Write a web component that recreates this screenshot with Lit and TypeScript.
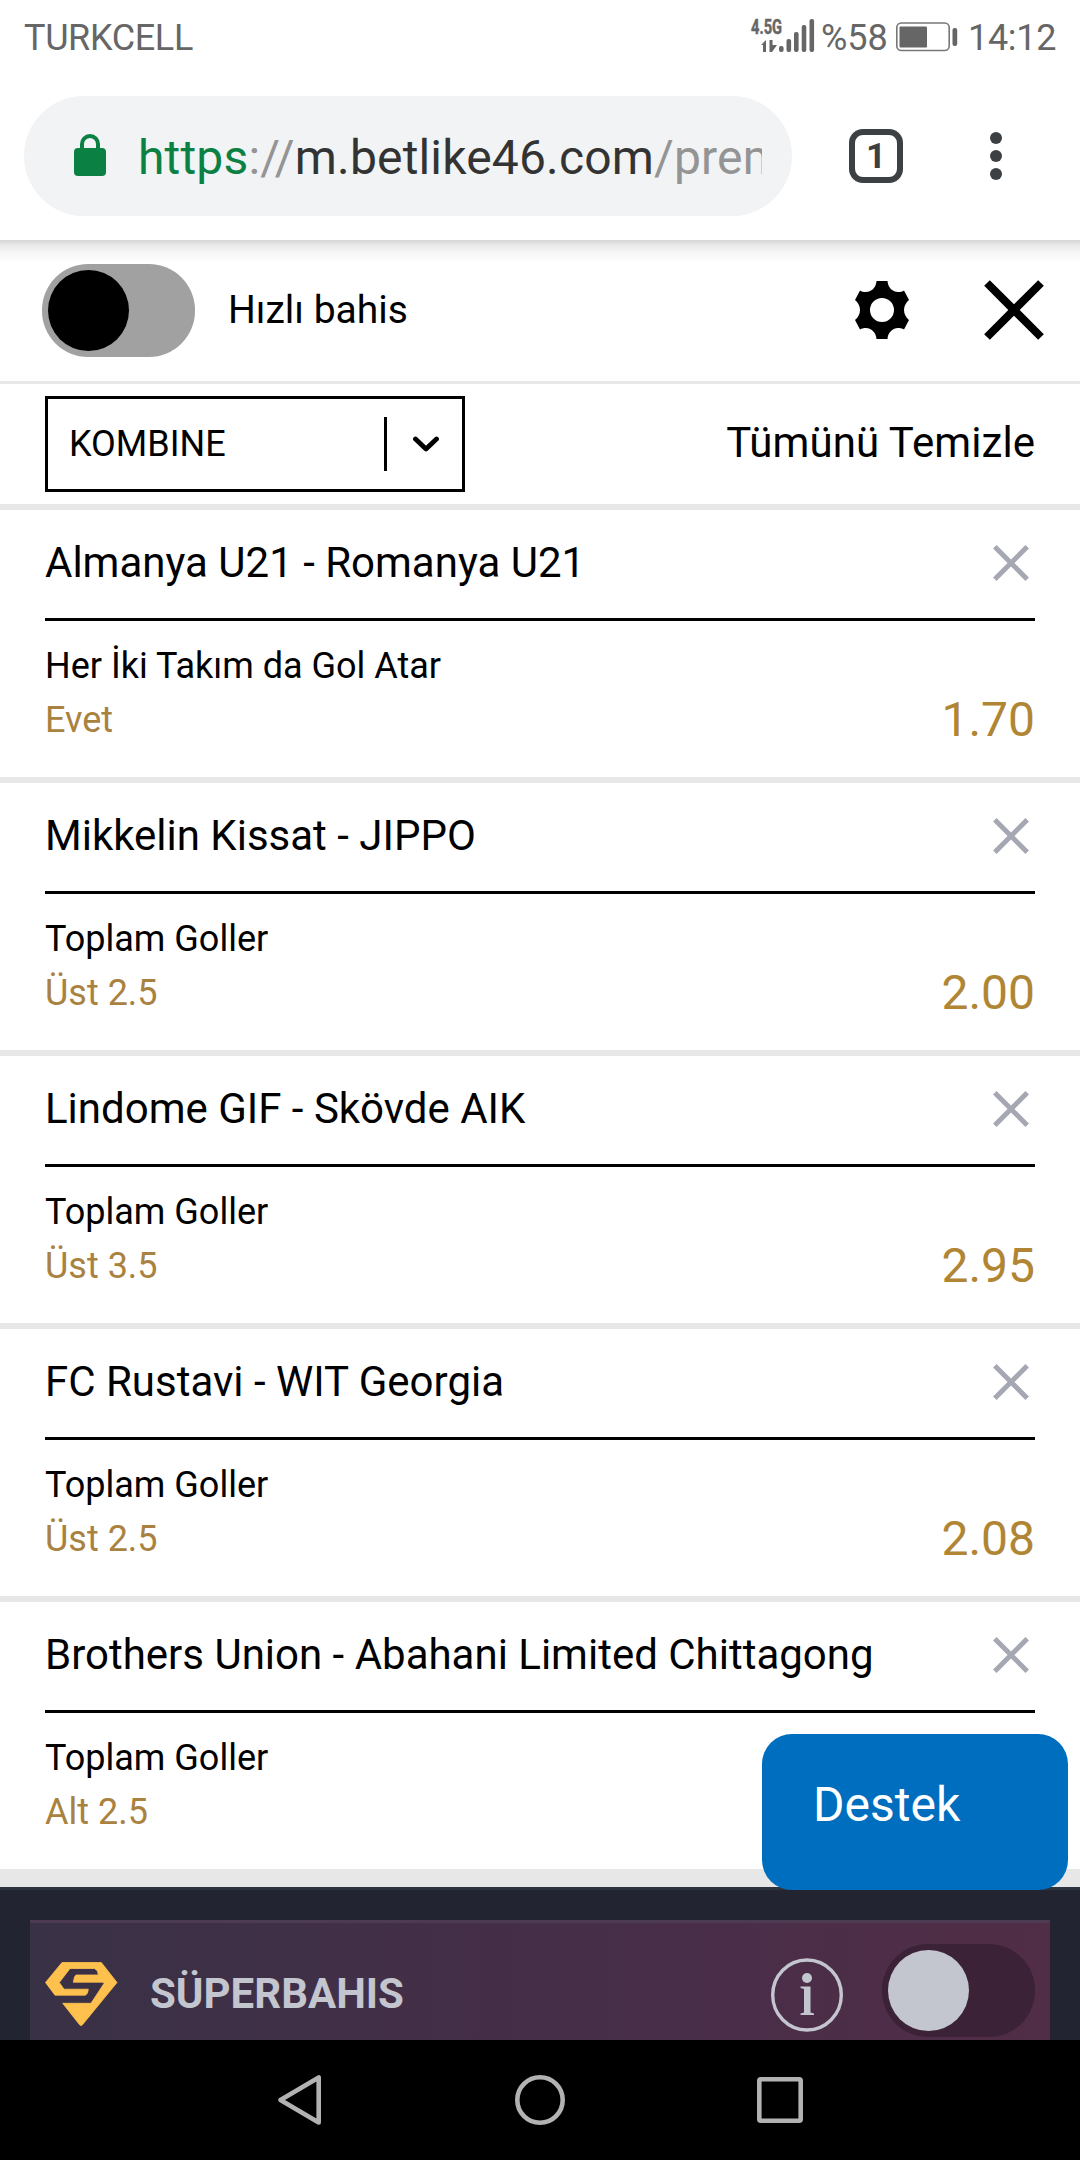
import { LitElement, html, css, svg } from "lit";
import { customElement, property } from "lit/decorators.js";

interface Bet {
  match: string;
  market: string;
  pick: string;
  odds: string;
}

const bets: Bet[] = [
  { match: "Almanya U21 - Romanya U21", market: "Her İki Takım da Gol Atar", pick: "Evet", odds: "1.70" },
  { match: "Mikkelin Kissat - JIPPO", market: "Toplam Goller", pick: "Üst 2.5", odds: "2.00" },
  { match: "Lindome GIF - Skövde AIK", market: "Toplam Goller", pick: "Üst 3.5", odds: "2.95" },
  { match: "FC Rustavi - WIT Georgia", market: "Toplam Goller", pick: "Üst 2.5", odds: "2.08" },
  { match: "Brothers Union - Abahani Limited Chittagong", market: "Toplam Goller", pick: "Alt 2.5", odds: "" },
];

@customElement("status-bar")
class StatusBar extends LitElement {
  static styles = css`
    :host { display: flex; align-items: center; height: 72px; box-sizing: border-box; padding: 3px 26px 0 24px; color: #666; font-size: 36px; line-height: 54px; }
    .carrier { flex: 1; letter-spacing: -0.35px; }
    .signal { width: 65px; height: 36px; margin: 0 6px 5px 0; overflow: visible; }
    .net { font: bold 21px "Roboto", sans-serif; stroke: #666; stroke-width: 0.5px; }
    .percent { width: 64px; white-space: nowrap; }
    .battery { width: 62px; height: 30px; margin: 0 10px 1px 11px; }
    .clock { width: 86px; white-space: nowrap; letter-spacing: -0.3px; }
  `;
  render() {
    return html`
      <span class="carrier">TURKCELL</span>
      <svg class="signal" viewBox="750 17 65 36" fill="#666">
        <text class="net" x="751" y="34" textLength="31" lengthAdjust="spacingAndGlyphs">4.5G</text>
        <path d="M766 40V52H763V45H761ZM769.500 40H772.500V45H777L772 52H769.500Z" />
        ${[[779, 46], [786.5, 39], [794, 32], [801.7, 25], [809.5, 19]].map(
          ([x, y]) => svg`<rect x=${x} y=${y} width="4.6" height=${52 - y} rx="2" />`
        )}
      </svg>
      <span class="percent">%58</span>
      <svg class="battery" viewBox="0 0 62 30">
        <rect x="0.8" y="1" width="52.400" height="27.500" rx="4.500" fill="none" stroke="#777" stroke-width="1.600" />
        <rect x="3.500" y="4.500" width="27.500" height="21" rx="1" fill="#666" />
        <rect x="56.500" y="6" width="4.700" height="18" rx="2" fill="#666" />
      </svg>
      <span class="clock">14:12</span>
    `;
  }
}

@customElement("browser-bar")
class BrowserBar extends LitElement {
  static styles = css`
    :host { display: flex; align-items: center; height: 168px; box-sizing: border-box; padding: 0 24px; }
    .omnibox { display: flex; align-items: center; width: 768px; height: 120px; box-sizing: border-box; padding: 0 30px 0 50px; border-radius: 60px; background: #f1f3f4; }
    .lock { width: 32px; height: 42px; margin: -2px 32px 0 0; flex: none; }
    .url { flex: 1; overflow: hidden; white-space: nowrap; font-size: 48px; line-height: 64px; letter-spacing: 0.16px; padding-top: 3px; color: #333; }
    .scheme { color: #0b8043; }
    .faint { color: #949494; }
    .tabs { display: flex; align-items: center; justify-content: center; width: 54px; height: 54px; box-sizing: border-box; margin-left: 57px; padding-top: 1px; border: 6px solid #3c4043; border-radius: 14px; font-size: 35px; font-weight: 700; line-height: 40px; color: #3c4043; }
    .menu { width: 12px; height: 50px; margin-left: 87px; }
  `;
  render() {
    return html`
      <div class="omnibox">
        <svg class="lock" viewBox="0 0 32 42">
          <rect y="14" width="32" height="28" rx="4" fill="#0b8043" />
          <path d="M8 16V10a8 8 0 0 1 16 0V16" fill="none" stroke="#0b8043" stroke-width="4" />
        </svg>
        <div class="url"><span class="scheme">https</span><span class="faint">://</span>m.betlike46.com<span class="faint">/prem</span></div>
      </div>
      <div class="tabs">1</div>
      <svg class="menu" viewBox="0 0 12 50" fill="#3c4043">
        <circle cx="6" cy="7" r="6" /><circle cx="6" cy="25" r="6" /><circle cx="6" cy="43" r="6" />
      </svg>
    `;
  }
}

@customElement("pill-toggle")
class PillToggle extends LitElement {
  static styles = css`
    :host { display: flex; width: 153px; height: 93px; box-sizing: border-box; padding: 6px; border-radius: 46px; background: var(--track); flex: none; }
    .knob { width: 81px; height: 81px; border-radius: 50%; background: var(--knob); }
  `;
  render() {
    return html`<div class="knob"></div>`;
  }
}

@customElement("bet-row")
class BetRow extends LitElement {
  @property({ attribute: false }) bet!: Bet;
  static styles = css`
    :host { display: block; height: 267px; padding: 0 45px; }
    .head { display: flex; align-items: center; justify-content: space-between; height: 108px; padding-right: 6px; border-bottom: 3px solid #000; }
    .match { font-size: 42px; line-height: 54px; white-space: nowrap; padding-bottom: 3px; }
    .remove { width: 36px; height: 36px; margin-bottom: 2px; }
    .body { display: flex; justify-content: space-between; padding-top: 18px; }
    .market, .pick { font-size: 36px; line-height: 54px; }
    .pick { color: #a9823f; }
    .odds { align-self: flex-end; font-size: 48px; line-height: 54px; color: #b08635; }
  `;
  render() {
    const { match, market, pick, odds } = this.bet;
    return html`
      <div class="head">
        <span class="match">${match}</span>
        <svg class="remove" viewBox="0 0 36 36"><path d="M1.800 1.800L34.200 34.200M34.200 1.800L1.800 34.200" stroke="#a5a8b3" stroke-width="5" /></svg>
      </div>
      <div class="body">
        <div>
          <div class="market">${market}</div>
          <div class="pick">${pick}</div>
        </div>
        <div class="odds">${odds}</div>
      </div>
    `;
  }
}

@customElement("app-root")
class AppRoot extends LitElement {
  static styles = css`
    :host { display: block; position: relative; width: 1080px; height: 2160px; overflow: hidden; background: #fff; color: #000; font-family: "Roboto", sans-serif; }
    .quick { display: flex; align-items: center; height: 141px; box-sizing: border-box; padding: 0 36px 0 42px; background: linear-gradient(#d6d6d6, #e9e9e9 5px, #f5f5f5 12px, #fff 23px); }
    .light { --track: #a1a1a1; --knob: #000; }
    .quick-label { flex: 1; padding: 0 0 2px 33px; font-size: 39px; line-height: 54px; }
    .gear { width: 54px; height: 58px; margin: 0 75px 2px 0; }
    .close { width: 60px; height: 60px; margin-bottom: 2px; }
    .tools { display: flex; align-items: center; justify-content: space-between; height: 120px; padding: 0 45px; border-top: 3px solid #e8e8e8; }
    .select { display: flex; align-items: center; width: 420px; height: 96px; box-sizing: border-box; border: 3px solid #000; }
    .value { flex: 1; padding-left: 21px; font-size: 36px; line-height: 54px; }
    .bar { width: 3px; height: 54px; background: #000; }
    .chevron { width: 26px; height: 16px; margin: 0 23px 0 26px; }
    .clear { font-size: 42px; line-height: 54px; padding-bottom: 2px; letter-spacing: 0.07px; }
    .item { border-top: 6px solid #e7e7e7; }
    .gap { height: 18px; background: #e7e7e7; }
    .footer { height: 153px; box-sizing: border-box; padding: 30px 30px 0; overflow: hidden; border-top: 3px solid #2e3340; background: #222531; }
    .promo { display: flex; height: 120px; box-sizing: border-box; padding: 21px 15px 0; border-top: 3px solid #4d3b53; background: linear-gradient(90deg, #393146, #432f47 40%, #482e49 60%, #512d47); }
    .logo { width: 73px; height: 64px; margin: 18px 32px 0 0; flex: none; }
    .brand { flex: 1; font-size: 42px; line-height: 54px; font-weight: 700; color: #c3c5cf; padding-top: 23px; }
    .info { width: 72px; height: 74px; margin: 13.5px 39px 0 0; flex: none; }
    .dark { --track: #3b2236; --knob: #c3c5cf; }
    .nav { display: flex; align-items: center; justify-content: center; gap: 190px; height: 120px; background: #000; }
    .nav-icon { width: 50px; height: 52px; }
    .support { position: absolute; left: 762px; top: 1734px; width: 306px; height: 156px; box-sizing: border-box; padding: 44px 0 0 51px; border-radius: 30px; background: #006ebe; color: #fff; font-size: 48px; line-height: 54px; }
  `;
  render() {
    return html`
      <status-bar></status-bar>
      <browser-bar></browser-bar>
      <div class="quick">
        <pill-toggle class="light"></pill-toggle>
        <span class="quick-label">Hızlı bahis</span>
        <svg class="gear" viewBox="-27 -29 54 58">
          <path fill-rule="evenodd" d="M-5.500 -29H5.500C6 -22 11 -18 16 -18C18.500 -18 20.500 -18.500 22 -19.500L27 -10C24 -7.500 22 -4 22 0C22 4 24 7.500 27 10L22 19.500C20.500 18.500 18.500 18 16 18C11 18 6 22 5.500 29H-5.500C-6 22 -11 18 -16 18C-18.500 18 -20.500 18.500 -22 19.500L-27 10C-24 7.500 -22 4 -22 0C-22 -4 -24 -7.500 -27 -10L-22 -19.500C-20.500 -18.500 -18.500 -18 -16 -18C-11 -18 -6 -22 -5.500 -29ZM12 0A12 12 0 1 0 -12 0A12 12 0 1 0 12 0Z" />
        </svg>
        <svg class="close" viewBox="0 0 60 60"><path d="M3 3L57 57M57 3L3 57" stroke="#000" stroke-width="8" /></svg>
      </div>
      <div class="tools">
        <div class="select">
          <span class="value">KOMBINE</span>
          <span class="bar"></span>
          <svg class="chevron" viewBox="0 0 26 16"><path d="M2.500 3L13 13L23.500 3" fill="none" stroke="#000" stroke-width="4.800" stroke-linecap="round" stroke-linejoin="round" /></svg>
        </div>
        <span class="clear">Tümünü Temizle</span>
      </div>
      <div class="list">${bets.map((bet) => html`<div class="item"><bet-row .bet=${bet}></bet-row></div>`)}</div>
      <div class="gap"></div>
      <div class="footer">
        <div class="promo">
          <svg class="logo" viewBox="0 0 73 64">
            <path fill="#ffc14d" stroke="#ffc14d" stroke-width="0.800" stroke-linejoin="round" d="M17 .5H56.300L72 20.500L37 63.300H35L17.700 41.300H46L59 21.500L58 20.200H28.300L29.500 15L31 13H53.300L52.500 9L49.500 6.500H25L14.300 20.500L19 27.200H43.300L42.500 31L40.500 33.200H10L.5 20.500Z" />
          </svg>
          <span class="brand">SÜPERBAHIS</span>
          <svg class="info" viewBox="0 0 72 74" fill="#c3c5cf">
            <ellipse cx="36" cy="37" rx="34.300" ry="35" fill="none" stroke="#c3c5cf" stroke-width="3.400" />
            <circle cx="36" cy="20" r="5" />
            <path d="M29.500 28.500H39.500V54.500L43 55.500V57H29.500V55.500L33 54.500V31L29.500 30Z" />
          </svg>
          <pill-toggle class="dark"></pill-toggle>
        </div>
      </div>
      <div class="nav">
        <svg class="nav-icon" viewBox="0 0 50 52" fill="none" stroke="#b2b2b2" stroke-width="4.600" stroke-linejoin="round"><path d="M5.500 26L43.700 3.500V48.500Z" /></svg>
        <svg class="nav-icon" viewBox="0 0 50 52" fill="none" stroke="#b2b2b2" stroke-width="4.600"><circle cx="25" cy="26" r="22.700" /></svg>
        <svg class="nav-icon" viewBox="0 0 50 52" fill="none" stroke="#b2b2b2" stroke-width="4.600"><rect x="4.300" y="5.300" width="41.400" height="41.400" rx="1.500" /></svg>
      </div>
      <div class="support">Destek</div>
    `;
  }
}
